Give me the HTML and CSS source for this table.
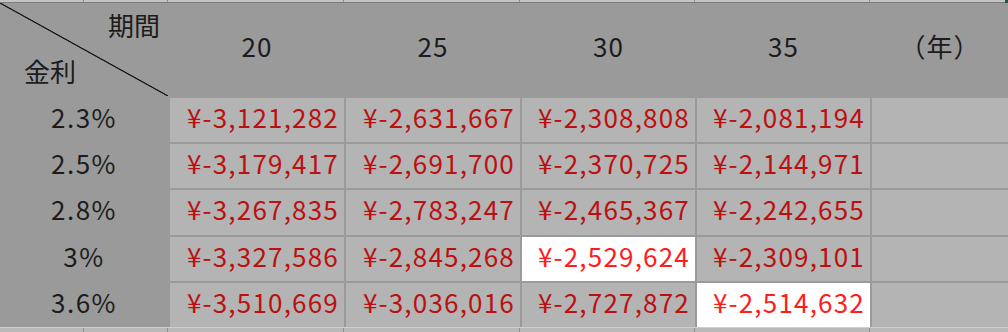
FILE: index.html
```html
<!DOCTYPE html>
<html lang="ja">
<head>
<meta charset="utf-8">
<link rel="stylesheet" href="styles.css">
</head>
<body>
<div class="strip strip-top">
  <span></span><span></span><span></span><span></span><span></span><span></span><span class="last"><i class="sel"></i></span>
</div>
<div class="sheet">
  <div class="corner">
    <span class="c-top">期間</span>
    <span class="c-bottom">金利</span>
  </div>
  <div class="head">20</div>
  <div class="head">25</div>
  <div class="head">30</div>
  <div class="head">35</div>
  <div class="head">（年）</div>

  <div class="rate">2.3%</div>
  <div class="val">¥-3,121,282</div>
  <div class="val">¥-2,631,667</div>
  <div class="val">¥-2,308,808</div>
  <div class="val">¥-2,081,194</div>
  <div class="val"></div>

  <div class="rate">2.5%</div>
  <div class="val">¥-3,179,417</div>
  <div class="val">¥-2,691,700</div>
  <div class="val">¥-2,370,725</div>
  <div class="val">¥-2,144,971</div>
  <div class="val"></div>

  <div class="rate">2.8%</div>
  <div class="val">¥-3,267,835</div>
  <div class="val">¥-2,783,247</div>
  <div class="val">¥-2,465,367</div>
  <div class="val">¥-2,242,655</div>
  <div class="val"></div>

  <div class="rate">3%</div>
  <div class="val">¥-3,327,586</div>
  <div class="val">¥-2,845,268</div>
  <div class="val hi">¥-2,529,624</div>
  <div class="val">¥-2,309,101</div>
  <div class="val"></div>

  <div class="rate">3.6%</div>
  <div class="val">¥-3,510,669</div>
  <div class="val">¥-3,036,016</div>
  <div class="val">¥-2,727,872</div>
  <div class="val hi">¥-2,514,632</div>
  <div class="val"></div>
</div>
<div class="strip strip-bottom">
  <span></span><span></span><span></span><span></span><span></span><span></span><span class="last"></span>
</div>
</body>
</html>
```

FILE: styles.css
```css
html, body {
  margin: 0;
  padding: 0;
}
body {
  width: 1008px;
  height: 332px;
  overflow: hidden;
  background: #9a9a9a;
  font-family: "Noto Sans CJK JP", "Noto Sans", sans-serif;
  font-size: 26px;
  color: #1c1c1c;
}
.strip {
  display: grid;
  grid-template-columns: 84px 84px 176px 176px 175px 175px 1fr;
  background: #c4c4c4;
}
.strip span {
  border-right: 1px solid #8e8e8e;
  position: relative;
}
.strip span.last {
  border-right: none;
}
.strip-top {
  height: 2px;
  border-bottom: 1px solid #7c7c7c;
}
.strip-bottom {
  height: 4px;
  border-top: 1px solid #cfcfcf;
  background: #b9b9b9;
}
.sel {
  position: absolute;
  right: 0;
  top: 0;
  width: 3px;
  height: 3px;
  background: #1f5c3c;
}
.sheet {
  display: grid;
  grid-template-columns: 168px 174px 174px 173px 173px 1fr;
  grid-template-rows: 93px 44px 44px 45px 44px 44px;
  gap: 2px;
  background: #9a9a9a;
}
.corner {
  display: flex;
  flex-direction: column;
  justify-content: space-between;
  padding: 4px 8px 7px 24px;
  background: linear-gradient(to top right, transparent calc(50% - 1px), #1a1a1a calc(50% - 0.3px), #1a1a1a calc(50% + 0.3px), transparent calc(50% + 1px)) #9a9a9a;
  line-height: 36px;
}
.c-top {
  align-self: flex-end;
}
.c-bottom {
  align-self: flex-start;
}
.head {
  display: flex;
  align-items: center;
  justify-content: center;
  background: #9a9a9a;
  padding-bottom: 8px;
  letter-spacing: 1px;
}
.rate {
  display: flex;
  align-items: center;
  justify-content: center;
  background: #9a9a9a;
  padding-bottom: 8px;
  letter-spacing: 1.5px;
}
.val {
  display: flex;
  align-items: center;
  justify-content: flex-end;
  padding-right: 5px;
  padding-bottom: 8px;
  background: #b4b4b4;
  color: #bb1010;
  letter-spacing: 1.2px;
}
.val.hi {
  background: #ffffff;
  color: #ff1c1c;
}
```
